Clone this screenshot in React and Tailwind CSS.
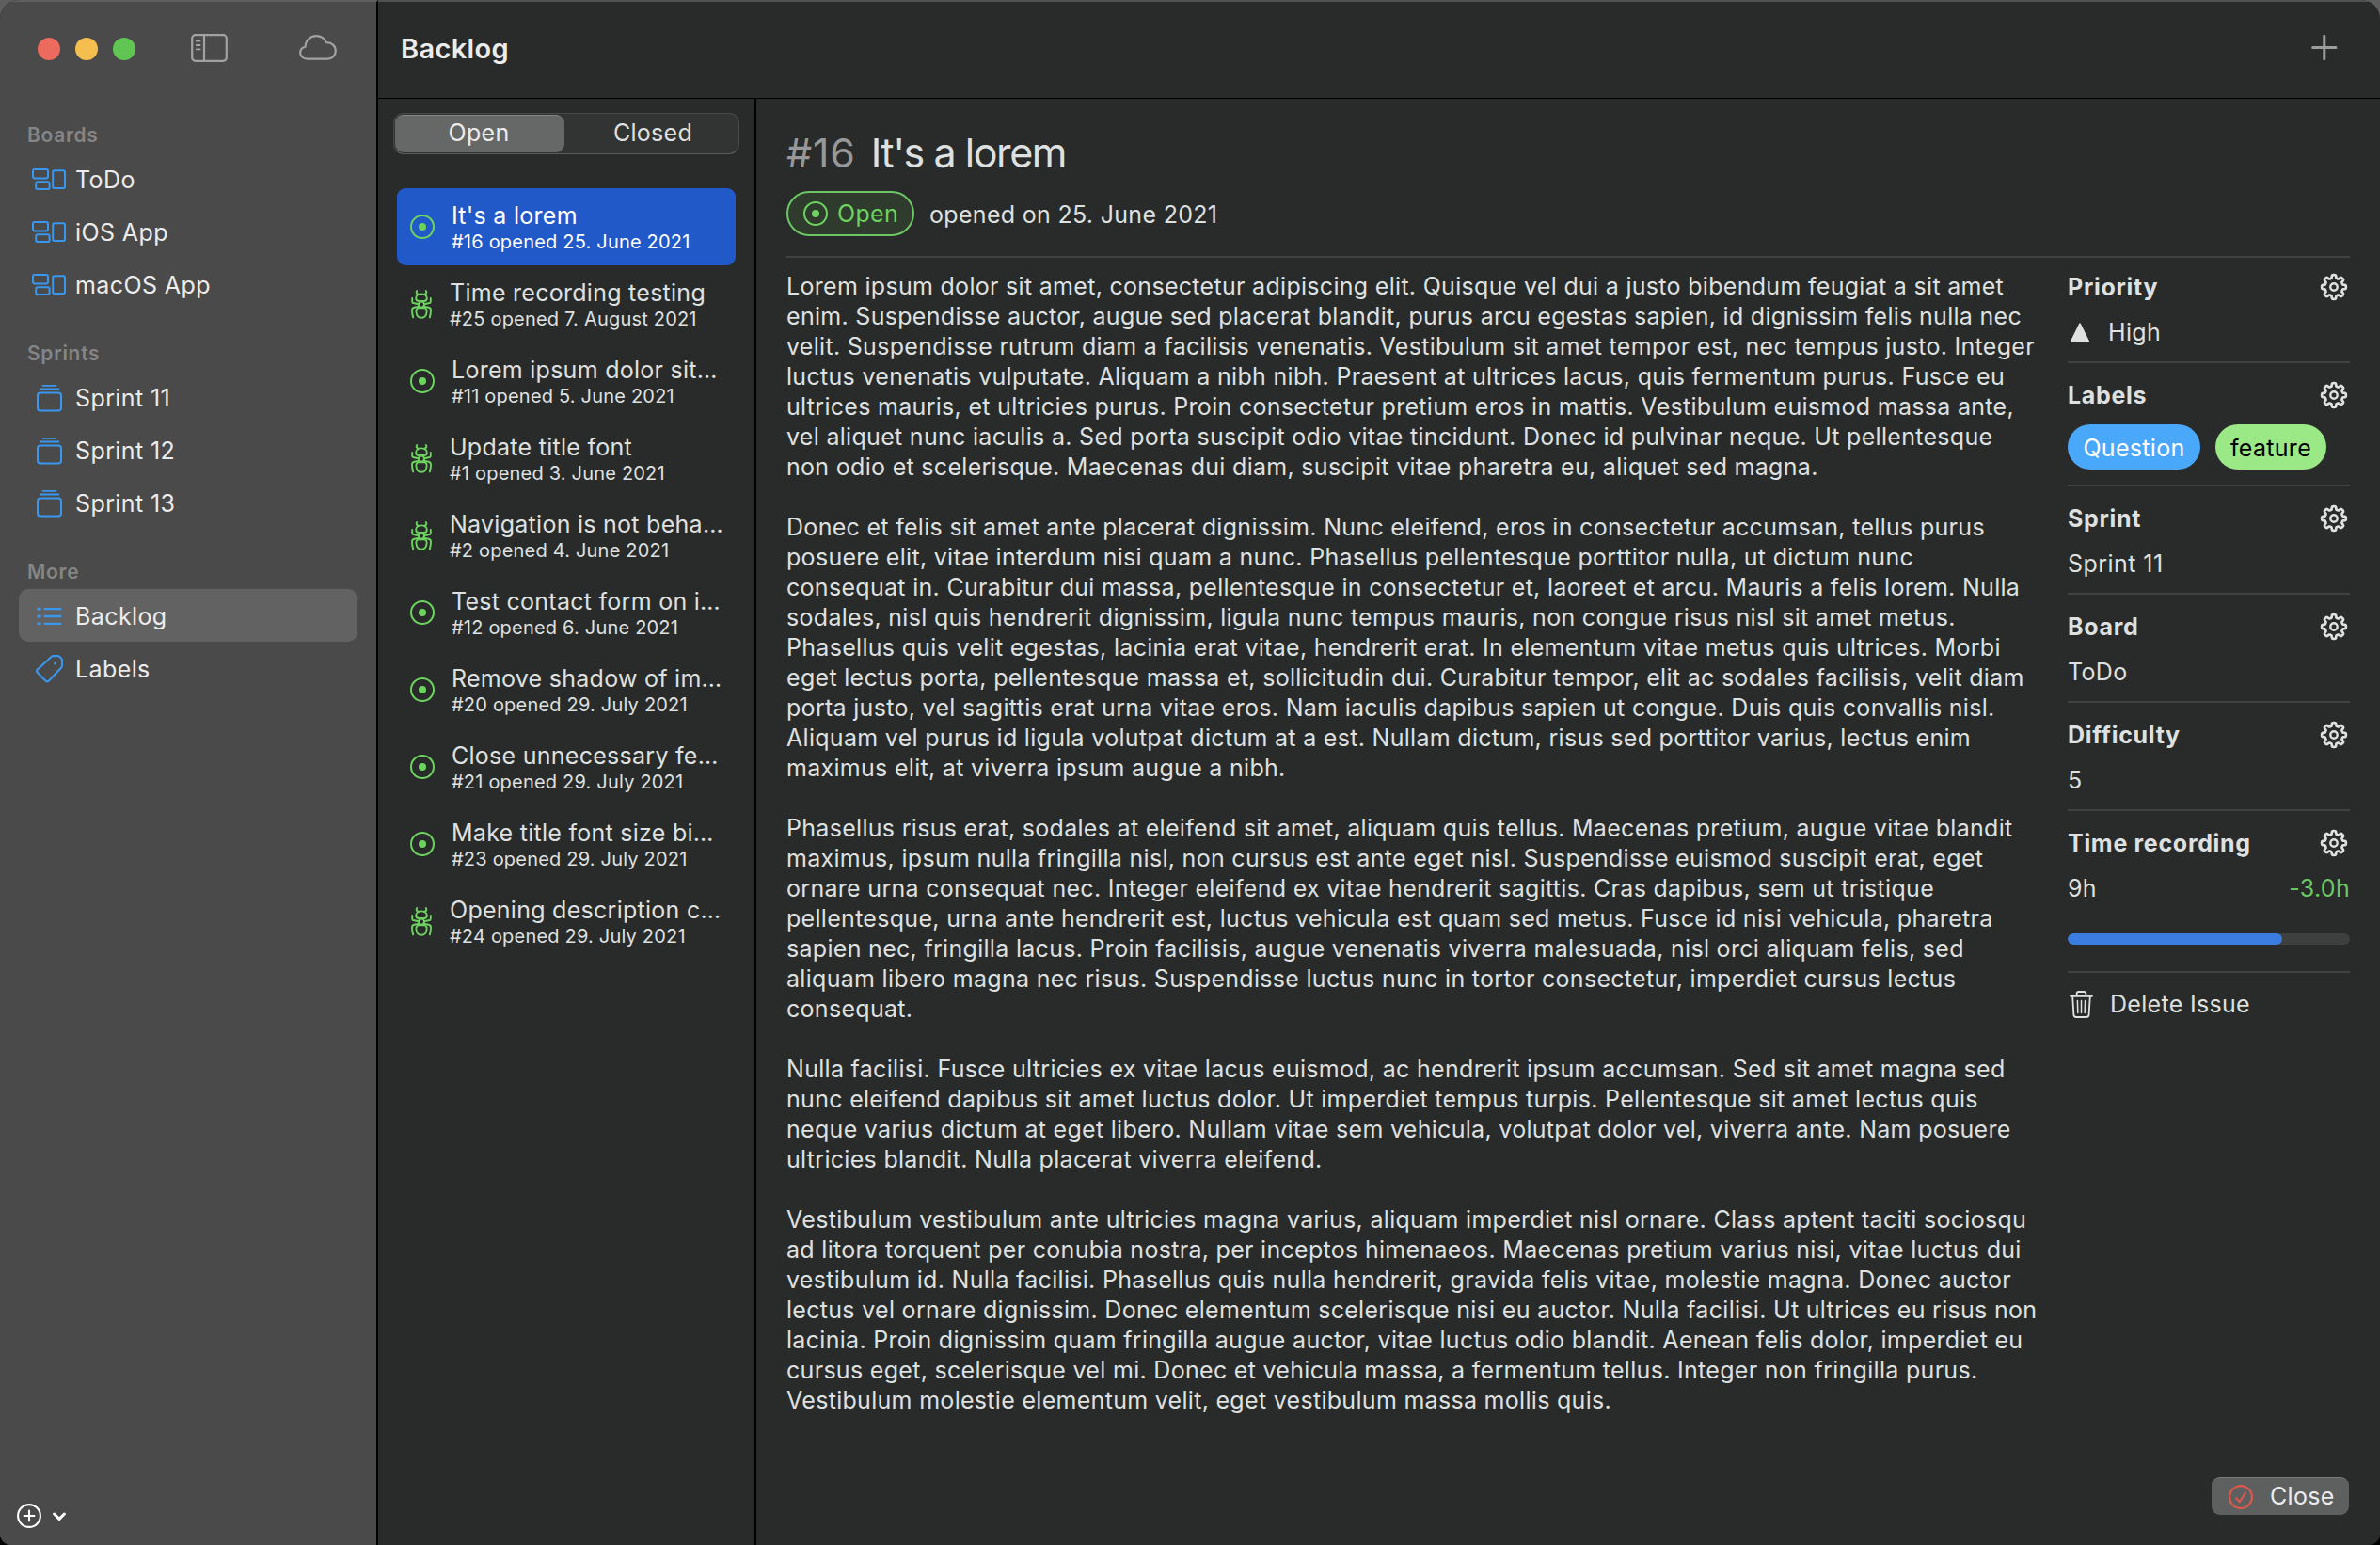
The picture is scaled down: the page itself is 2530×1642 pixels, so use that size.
import React from "react";

const paragraphs = [
  `Lorem ipsum dolor sit amet, consectetur adipiscing elit. Quisque vel dui a justo bibendum feugiat a sit amet
enim. Suspendisse auctor, augue sed placerat blandit, purus arcu egestas sapien, id dignissim felis nulla nec
velit. Suspendisse rutrum diam a facilisis venenatis. Vestibulum sit amet tempor est, nec tempus justo. Integer
luctus venenatis vulputate. Aliquam a nibh nibh. Praesent at ultrices lacus, quis fermentum purus. Fusce eu
ultrices mauris, et ultricies purus. Proin consectetur pretium eros in mattis. Vestibulum euismod massa ante,
vel aliquet nunc iaculis a. Sed porta suscipit odio vitae tincidunt. Donec id pulvinar neque. Ut pellentesque
non odio et scelerisque. Maecenas dui diam, suscipit vitae pharetra eu, aliquet sed magna.`,
  `Donec et felis sit amet ante placerat dignissim. Nunc eleifend, eros in consectetur accumsan, tellus purus
posuere elit, vitae interdum nisi quam a nunc. Phasellus pellentesque porttitor nulla, ut dictum nunc
consequat in. Curabitur dui massa, pellentesque in consectetur et, laoreet et arcu. Mauris a felis lorem. Nulla
sodales, nisl quis hendrerit dignissim, ligula nunc tempus mauris, non congue risus nisl sit amet metus.
Phasellus quis velit egestas, lacinia erat vitae, hendrerit erat. In elementum vitae metus quis ultrices. Morbi
eget lectus porta, pellentesque massa et, sollicitudin dui. Curabitur tempor, elit ac sodales facilisis, velit diam
porta justo, vel sagittis erat urna vitae eros. Nam iaculis dapibus sapien ut congue. Duis quis convallis nisl.
Aliquam vel purus id ligula volutpat dictum at a est. Nullam dictum, risus sed porttitor varius, lectus enim
maximus elit, at viverra ipsum augue a nibh.`,
  `Phasellus risus erat, sodales at eleifend sit amet, aliquam quis tellus. Maecenas pretium, augue vitae blandit
maximus, ipsum nulla fringilla nisl, non cursus est ante eget nisl. Suspendisse euismod suscipit erat, eget
ornare urna consequat nec. Integer eleifend ex vitae hendrerit sagittis. Cras dapibus, sem ut tristique
pellentesque, urna ante hendrerit est, luctus vehicula est quam sed metus. Fusce id nisi vehicula, pharetra
sapien nec, fringilla lacus. Proin facilisis, augue venenatis viverra malesuada, nisl orci aliquam felis, sed
aliquam libero magna nec risus. Suspendisse luctus nunc in tortor consectetur, imperdiet cursus lectus
consequat.`,
  `Nulla facilisi. Fusce ultricies ex vitae lacus euismod, ac hendrerit ipsum accumsan. Sed sit amet magna sed
nunc eleifend dapibus sit amet luctus dolor. Ut imperdiet tempus turpis. Pellentesque sit amet lectus quis
neque varius dictum at eget libero. Nullam vitae sem vehicula, volutpat dolor vel, viverra ante. Nam posuere
ultricies blandit. Nulla placerat viverra eleifend.`,
  `Vestibulum vestibulum ante ultricies magna varius, aliquam imperdiet nisl ornare. Class aptent taciti sociosqu
ad litora torquent per conubia nostra, per inceptos himenaeos. Maecenas pretium varius nisi, vitae luctus dui
vestibulum id. Nulla facilisi. Phasellus quis nulla hendrerit, gravida felis vitae, molestie magna. Donec auctor
lectus vel ornare dignissim. Donec elementum scelerisque nisi eu auctor. Nulla facilisi. Ut ultrices eu risus non
lacinia. Proin dignissim quam fringilla augue auctor, vitae luctus odio blandit. Aenean felis dolor, imperdiet eu
cursus eget, scelerisque vel mi. Donec et vehicula massa, a fermentum tellus. Integer non fringilla purus.
Vestibulum molestie elementum velit, eget vestibulum massa mollis quis.`,
];

const issues = [
  { type: "task", title: "It's a lorem", sub: "#16 opened 25. June 2021", active: true },
  { type: "bug", title: "Time recording testing", sub: "#25 opened 7. August 2021" },
  { type: "task", title: "Lorem ipsum dolor sit…", sub: "#11 opened 5. June 2021" },
  { type: "bug", title: "Update title font", sub: "#1 opened 3. June 2021" },
  { type: "bug", title: "Navigation is not beha…", sub: "#2 opened 4. June 2021" },
  { type: "task", title: "Test contact form on i…", sub: "#12 opened 6. June 2021" },
  { type: "task", title: "Remove shadow of im…", sub: "#20 opened 29. July 2021" },
  { type: "task", title: "Close unnecessary fe…", sub: "#21 opened 29. July 2021" },
  { type: "task", title: "Make title font size bi…", sub: "#23 opened 29. July 2021" },
  { type: "bug", title: "Opening description c…", sub: "#24 opened 29. July 2021" },
];

/* Eight-toothed gear outline around (15,15) */
const gearPath =
  Array.from({ length: 240 }, (_, i) => {
    const a = (i / 240) * Math.PI * 2;
    const r = 11.2 + 1.65 * Math.tanh(2.6 * Math.cos(8 * a) + 0.1);
    return `${i ? "L" : "M"}${(15 + r * Math.cos(a)).toFixed(2)} ${(15 + r * Math.sin(a)).toFixed(2)}`;
  }).join("") + "Z";

function Gear() {
  return (
    <svg width="30" height="30" viewBox="0 0 30 30" fill="none" stroke="#dfe0e0" strokeWidth="2.7" strokeLinejoin="round">
      <path d={gearPath} />
      <circle cx="15" cy="15" r="3.7" strokeWidth="2.4" />
    </svg>
  );
}

function Target() {
  return (
    <svg width="26" height="26" viewBox="0 0 26 26" className="shrink-0 text-[#6dd35f]">
      <circle cx="13" cy="13" r="12" fill="none" stroke="currentColor" strokeWidth="2" />
      <circle cx="13" cy="13" r="4" fill="currentColor" />
    </svg>
  );
}

function Ant() {
  return (
    <svg width="22" height="31" viewBox="0 0 22 31" fill="none" stroke="#6dd35f" strokeWidth="1.9" strokeLinecap="round" strokeLinejoin="round" className="shrink-0">
      <path d="M6.2 1C5 3 6 4.4 8 4.8M15.8 1C17 3 16 4.4 14 4.8" />
      <path d="M11 4.4C7.2 4.4 5.2 6.6 5.2 9C5.2 11 6.6 12 8.4 12H13.6C15.4 12 16.8 11 16.8 9C16.8 6.6 14.8 4.4 11 4.4Z" />
      <circle cx="11" cy="15.6" r="3" />
      <path d="M8 19.4H14C16.2 19.6 16.8 21.4 16.6 23.4C16.2 27.4 14.2 29.8 11 29.8C7.8 29.8 5.8 27.4 5.4 23.4C5.2 21.4 5.8 19.6 8 19.4Z" />
      <path d="M1.2 9V12.4C1.2 13.4 1.6 13.8 2.4 14L8 15.2M20.8 9V12.4C20.8 13.4 20.4 13.8 19.6 14L14 15.2" />
      <path d="M8.6 17.8L3.4 18.8C1.6 19.2 1 20.2 1 21.8C1 24.8 1.4 27 2.2 29.4M13.4 17.8L18.6 18.8C20.4 19.2 21 20.2 21 21.8C21 24.8 20.6 27 19.8 29.4" />
    </svg>
  );
}

function BoardIcon() {
  return (
    <svg width="37" height="23" viewBox="0 0 37 23" fill="none" stroke="#3a97f0" strokeWidth="2">
      <rect x="1" y="1" width="16" height="9.4" rx="1.8" />
      <rect x="4.2" y="14.2" width="14.4" height="7.8" rx="1.8" />
      <rect x="22.2" y="2.2" width="12.8" height="18.8" rx="1.8" />
    </svg>
  );
}

function SprintIcon() {
  return (
    <svg width="28" height="30" viewBox="0 0 28 30" fill="none" stroke="#3a97f0" strokeWidth="2" strokeLinecap="round">
      <path d="M6.4 1.9H20.6" strokeWidth="1.6" />
      <path d="M4 5.5H23.4" strokeWidth="1.8" />
      <rect x="1" y="9.5" width="25" height="19" rx="3" />
    </svg>
  );
}

function ListIcon() {
  return (
    <svg width="28" height="20" viewBox="0 0 28 20" stroke="#3a97f0" strokeWidth="2.3" strokeLinecap="round">
      <path d="M1.6 2.2H3.4M1.6 10H3.4M1.6 17.8H3.4" strokeWidth="2.8" />
      <path d="M8.6 2.2H25.4M8.6 10H25.4M8.6 17.8H25.4" />
    </svg>
  );
}

function TagIcon() {
  return (
    <svg width="30" height="30" viewBox="0 0 30 30" fill="none" stroke="#3a97f0" strokeWidth="2.1" strokeLinejoin="round">
      <path d="M16 2.4C16.8 1.5 17.6 1.1 18.8 1.1H23.2C24.2 1.1 24.9 1.4 25.6 2L27 3.6C27.7 4.3 28 5 28 6V11.2C28 12.4 27.6 13.2 26.8 14L14 27.4C12.8 28.7 11.6 28.7 10.4 27.5L1.9 18.9C0.7 17.7 0.7 16.7 1.9 15.6Z" />
      <circle cx="20.6" cy="9" r="1.6" fill="#3a97f0" stroke="none" />
    </svg>
  );
}

function NavRow({ icon, label, active }) {
  return (
    <div className={`mx-5 flex h-14 items-center rounded-[10px] ${active ? "bg-[#626262]" : ""}`}>
      <div className="ml-[14px] flex w-[37px] shrink-0 justify-center pt-px">{icon}</div>
      <span className="ml-[9px] pt-[3px] text-[25px] tracking-[0.4px] text-[#ececec]">{label}</span>
    </div>
  );
}

function NavHeader({ children }) {
  return (
    <div className="flex h-16 items-end pl-[29px] text-[21px] leading-[26px] font-semibold tracking-[0.7px] text-[#858585]">
      <span className="pb-[5px]">{children}</span>
    </div>
  );
}

function Rule() {
  return <div className="h-[2px] bg-[#404241]" />;
}

function SectionTitle({ children, first }) {
  return (
    <div className={`flex h-8 items-center justify-between pr-[2px] ${first ? "mt-[15px]" : "mt-[18px]"}`}>
      <span className="font-bold leading-8 tracking-[0.7px]">{children}</span>
      <div className="pb-px">
        <Gear />
      </div>
    </div>
  );
}

export default function App() {
  return (
    <div className="h-[1642px] w-[2530px] overflow-hidden bg-[linear-gradient(#5e5e5e_50%,#000_50%)] font-['Inter',sans-serif] text-[25px] tracking-[0.31px] whitespace-nowrap text-[#dfe0e0]">
      <div className="flex h-full w-full overflow-hidden rounded-t-[20px] rounded-b-[12px] bg-[#292b2a]">
        <aside className="flex w-[402px] shrink-0 flex-col border-t-2 border-r-2 border-t-[#5f5f5f] border-r-black bg-[#4a4a4a]">
          <div className="flex h-24 items-start pt-[34px] pl-10">
            <div className="mt-1 flex gap-4">
              <div className="size-6 rounded-full bg-[#ed6a5f]" />
              <div className="size-6 rounded-full bg-[#f5bf4f]" />
              <div className="size-6 rounded-full bg-[#61c554]" />
            </div>
            <svg className="ml-[59px]" width="39" height="30" viewBox="0 0 39 30" fill="none" stroke="#a2a2a2" strokeWidth="2.2" strokeLinecap="round">
              <rect x="1.2" y="1.2" width="36.6" height="27.6" rx="3.5" />
              <path d="M14 1.2V28.8" />
              <path d="M5.8 7.6H9.6M5.8 12H9.6M5.8 16.4H9.6" strokeWidth="1.8" />
            </svg>
            <svg className="mt-px ml-[76px]" width="40" height="27" viewBox="0 0 40 27" fill="none" stroke="#a2a2a2" strokeWidth="2.2" strokeLinejoin="round">
              <path d="M8.6 25.6C4.2 25.6 1.2 22.8 1.2 19.2C1.2 16 3.2 13.6 6.6 12.8C6.6 6.2 11.8 1.2 18.2 1.2C23 1.2 27 3.8 28.8 8.2C34.8 8 38.8 11.8 38.8 17C38.8 22 35 25.6 30 25.6Z" />
            </svg>
          </div>
          <div>
            <NavHeader>Boards</NavHeader>
            <NavRow icon={<BoardIcon />} label="ToDo" />
            <NavRow icon={<BoardIcon />} label="iOS App" />
            <NavRow icon={<BoardIcon />} label="macOS App" />
            <NavHeader>Sprints</NavHeader>
            <NavRow icon={<SprintIcon />} label="Sprint 11" />
            <NavRow icon={<SprintIcon />} label="Sprint 12" />
            <NavRow icon={<SprintIcon />} label="Sprint 13" />
            <NavHeader>More</NavHeader>
            <NavRow icon={<ListIcon />} label="Backlog" active />
            <NavRow icon={<TagIcon />} label="Labels" />
          </div>
          <div className="mt-auto mb-[18px] flex items-center pl-[18px]">
            <svg width="26" height="26" viewBox="0 0 26 26" fill="none" stroke="#fff" strokeWidth="2.1" strokeLinecap="round">
              <circle cx="13" cy="13" r="11.9" />
              <path d="M7.6 13H18.4M13 7.6V18.4" />
            </svg>
            <svg className="mt-[2px] ml-3" width="14" height="10" viewBox="0 0 14 10" fill="none" stroke="#fff" strokeWidth="3" strokeLinecap="round" strokeLinejoin="round">
              <path d="M1.6 2L7 7.4L12.4 2" />
            </svg>
          </div>
        </aside>

        <div className="flex min-w-0 flex-1 flex-col">
          <header className="flex h-[105px] shrink-0 items-start justify-between border-t-2 border-b border-t-[#505251] border-b-black pr-[45px] pl-6">
            <span className="mt-8 text-[29px] leading-9 font-semibold tracking-[0.35px] text-[#ececec]">Backlog</span>
            <svg className="mt-[34px]" width="28" height="28" viewBox="0 0 28 28" stroke="#9b9c9c" strokeWidth="3" strokeLinecap="round">
              <path d="M1.6 14.5H26M13.8 2.3V26.7" />
            </svg>
          </header>

          <div className="flex min-h-0 flex-1">
            <section className="w-[402px] shrink-0 border-r-2 border-black pt-[15px]">
              <div className="ml-4 flex h-11 w-[368px] rounded-[11px] border border-[#474948] border-b-[#5a5c5b] bg-[#323433] p-px">
                <div className="flex h-10 w-[180px] items-center justify-center rounded-[9px] border-t border-[#848685] bg-[#666867] pr-[2px] pb-px text-[#ececec]">Open</div>
                <div className="flex h-10 flex-1 items-center justify-center pl-1">Closed</div>
              </div>
              <ul className="mt-9 ml-5 w-[360px]">
                {issues.map((it) => (
                  <li key={it.sub} className={`flex h-[82px] items-start rounded-[9px] pl-[14px] ${it.active ? "bg-[#2159c8] text-white" : ""}`}>
                    <div className={`flex h-[82px] items-center ${it.type === "bug" ? "w-[42px] pl-px" : "w-11"}`}>
                      {it.type === "bug" ? <Ant /> : <Target />}
                    </div>
                    <div className="pt-[14px]">
                      <div className="leading-[30px] tracking-[0.27px]">{it.title}</div>
                      <div className="text-[20px] leading-[26px] tracking-[0.2px]">{it.sub}</div>
                    </div>
                  </li>
                ))}
              </ul>
            </section>

            <main className="flex min-w-0 flex-1 flex-col px-8">
              <h1 className="mt-[31px] flex gap-4 text-[43px] leading-[52px]">
                <span className="tracking-[0.8px] text-[#979899]">#16</span>
                <span className="tracking-[-1.45px]">It's a lorem</span>
              </h1>
              <div className="mt-[15px] flex h-12 items-center gap-4">
                <div className="flex h-12 w-[136px] items-center gap-[10px] rounded-full border-2 border-[#6dc665] bg-[#2e3b2d] pl-4 text-[#6dd35f]">
                  <Target />
                  <span className="pt-[2px]">Open</span>
                </div>
                <span className="pt-[3px]">opened on 25. June 2021</span>
              </div>
              <div className="mt-[21px]">
                <Rule />
              </div>
              <div className="flex justify-between">
                <article className="mt-[14px] leading-8 tracking-[0.3px]">
                  {paragraphs.map((p, i) => (
                    <p key={i} className="mb-8 whitespace-pre">{p}</p>
                  ))}
                </article>
                <aside className="w-[300px] shrink-0">
                  <SectionTitle first>Priority</SectionTitle>
                  <div className="mt-4 mb-[15px] flex items-center leading-8">
                    <svg className="ml-[3px]" width="20" height="21" viewBox="0 0 20 21" fill="#dfe0e0" stroke="#dfe0e0" strokeWidth="2" strokeLinejoin="round">
                      <path d="M10 1.4L19 19.8H1Z" />
                    </svg>
                    <span className="ml-5">High</span>
                  </div>
                  <Rule />
                  <SectionTitle>Labels</SectionTitle>
                  <div className="mt-[15px] mb-4 flex gap-4">
                    <div className="flex h-12 w-[141px] items-center justify-center rounded-full bg-[#4aa8fb] pt-[3px] text-white">Question</div>
                    <div className="flex h-12 w-[118px] items-center justify-center rounded-full bg-[#9ae886] pt-[3px] text-black">feature</div>
                  </div>
                  <Rule />
                  <SectionTitle>Sprint</SectionTitle>
                  <div className="mt-4 mb-[15px] leading-8 tracking-[0.45px]">Sprint 11</div>
                  <Rule />
                  <SectionTitle>Board</SectionTitle>
                  <div className="mt-4 mb-[15px] leading-8">ToDo</div>
                  <Rule />
                  <SectionTitle>Difficulty</SectionTitle>
                  <div className="mt-4 mb-[15px] leading-8">5</div>
                  <Rule />
                  <SectionTitle>Time recording</SectionTitle>
                  <div className="mt-4 flex justify-between leading-8">
                    <span>9h</span>
                    <span className="text-[#6dc665]">-3.0h</span>
                  </div>
                  <div className="mt-8 mb-7 h-3 overflow-hidden rounded-full bg-[#3e403f]">
                    <div className="h-3 w-[228px] rounded-full bg-[#3a7cdf]" />
                  </div>
                  <Rule />
                  <div className="mt-[17px] flex items-center leading-8">
                    <svg className="ml-[2px]" width="25" height="29" viewBox="0 0 25 29" fill="none" stroke="#dfe0e0" strokeWidth="1.8" strokeLinecap="round" strokeLinejoin="round">
                      <path d="M1 5.8H24M7.6 5.6V3.2C7.6 1.8 8.4 1 9.8 1H15.2C16.6 1 17.4 1.8 17.4 3.2V5.6M3.2 6L4.4 25.4C4.5 27 5.4 28 7 28H18C19.6 28 20.5 27 20.6 25.4L21.8 6" />
                      <path d="M8.4 10.4L8.8 23.6M12.5 10.4V23.6M16.6 10.4L16.2 23.6" strokeWidth="1.5" />
                    </svg>
                    <span className="ml-[18px]">Delete Issue</span>
                  </div>
                </aside>
              </div>
              <button className="mt-auto mr-px mb-8 flex h-10 w-[146px] items-center self-end rounded-[9px] border-t border-[#7a7b7b] bg-[#5e5f5f] pl-[18px] text-[#ececec]">
                <svg width="26" height="26" viewBox="0 0 26 26" fill="none" stroke="#e0574b" strokeWidth="2.1" strokeLinecap="round" strokeLinejoin="round">
                  <circle cx="13" cy="13" r="11.9" />
                  <path d="M8.2 14.2L11.8 18.2L18 8.6" />
                </svg>
                <span className="ml-[18px]">Close</span>
              </button>
            </main>
          </div>
        </div>
      </div>
    </div>
  );
}
